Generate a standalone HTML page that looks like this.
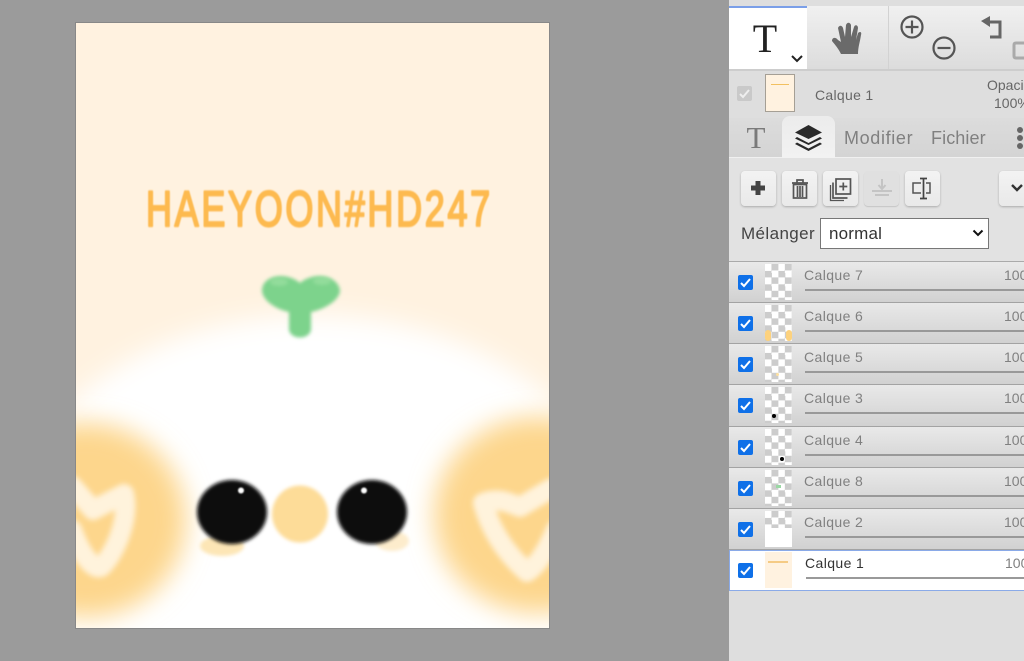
<!DOCTYPE html>
<html><head><meta charset="utf-8">
<style>
html,body{margin:0;padding:0;width:1024px;height:661px;overflow:hidden;background:#9b9b9b;font-family:"Liberation Sans",sans-serif}
#cv{position:absolute;left:0;top:0}
#p{position:absolute;left:729px;top:0;width:295px;height:661px;background:#dedede;overflow:hidden;filter:blur(.35px)}
#p *{box-sizing:border-box}
.a{position:absolute}
.top{left:0;top:6px;width:295px;height:65px;background:linear-gradient(#f0f0f0,#dcdcdc);border-bottom:2px solid #cdcdcd}
.tab{color:#808080;font-size:18px;top:128px;line-height:20px}
.b{position:absolute;top:171px;width:35px;height:35px;background:linear-gradient(#f3f3f3,#e9e9e9);border-radius:4px;box-shadow:0 1px 2px #aaa}
.r{position:absolute;left:0;width:295px;height:41.14px;background:linear-gradient(#e9e9e9,#d1d1d1);border-bottom:1px solid #a3a3a3}
.r.s{background:#fff;border:1px solid #8aaae8;border-right:0;height:41px}
.c{position:absolute;left:9px;top:13px;width:15px;height:15px;background:#0f70e8;border-radius:2px}
.c svg{position:absolute;left:0;top:0}
.t{position:absolute;left:36px;top:2px;width:27px;height:36px;background-color:#fff;background-image:conic-gradient(#ccc 25%,#fff 0 50%,#ccc 0 75%,#fff 0);background-size:13.400px 13.400px;overflow:hidden}
.n{position:absolute;left:75px;top:5px;font-size:14px;line-height:16px;color:#808080;letter-spacing:.4px}
.o{position:absolute;left:275px;top:5px;font-size:14px;line-height:16px;color:#808080}
.l{position:absolute;left:76px;top:27px;width:219px;height:2px;background:#999}
.s .n{color:#333;top:4px}.s .o{top:4px}.s .l{top:26px}.s .c{left:8px;top:12px}.s .t{left:35px;top:1px}
.d{position:absolute;background:#000;border-radius:50%}
</style></head><body>
<svg id="cv" width="729" height="661" viewBox="0 0 729 661">
<defs>
<filter id="b14" x="-40%" y="-40%" width="180%" height="180%"><feGaussianBlur stdDeviation="13"/></filter>
<filter id="b3" x="-40%" y="-40%" width="180%" height="180%"><feGaussianBlur stdDeviation="2.6"/></filter>
<filter id="b2" x="-40%" y="-40%" width="180%" height="180%"><feGaussianBlur stdDeviation="1.8"/></filter>
<filter id="b1" x="-40%" y="-40%" width="180%" height="180%"><feGaussianBlur stdDeviation=".7"/></filter>
<clipPath id="cp"><rect x="76" y="23" width="473" height="605"/></clipPath>
</defs>
<rect width="729" height="661" fill="#9b9b9b"/>
<rect x="76" y="23" width="473" height="605" fill="#fff2e0"/>
<g clip-path="url(#cp)">
<path d="M8 540 A305 225 0 0 1 618 540 V628 H8 Z" fill="#fff" filter="url(#b14)"/>
<rect x="76" y="540" width="473" height="90" fill="#fff"/>
<ellipse cx="86" cy="520" rx="100" ry="97" fill="#fdd68c" filter="url(#b14)"/>
<ellipse cx="538" cy="515" rx="104" ry="98" fill="#fdd68c" filter="url(#b14)"/>
<g fill="none" stroke="#fff3dc" stroke-width="20" stroke-linejoin="round" stroke-linecap="round" filter="url(#b3)">
<path d="M72 486 L93 510 L124 494 C130 520 114 555 101 567 C92 570 80 552 72 530"/>
<path d="M483 503 C498 497 510 503 520 507 L552 488 M483 503 C492 535 510 557 527 572 C538 565 548 548 556 530"/>
</g>
<ellipse cx="222" cy="546" rx="22" ry="10" fill="#fde6b6" filter="url(#b2)"/>
<ellipse cx="392" cy="541" rx="17" ry="10" fill="#fdeccc" filter="url(#b2)"/>
<ellipse cx="300" cy="514" rx="28" ry="28.5" fill="#fddc98" filter="url(#b2)"/>
<ellipse cx="232" cy="512" rx="35" ry="32" fill="#0d0d0d" filter="url(#b2)"/>
<ellipse cx="372" cy="512" rx="35" ry="32" fill="#0d0d0d" filter="url(#b2)"/>
<circle cx="241" cy="490.500" r="3" fill="#fff" filter="url(#b1)"/>
<circle cx="364" cy="490.500" r="3" fill="#fff" filter="url(#b1)"/>
<path d="M262 290 C263 274 288 272 300 283 C312 272 337 274 340 290 C340 300 325 309 311 312 L311 330 C309 340 291 340 289 330 L289 312 C275 309 262 300 262 290 Z" fill="#7dd38c" filter="url(#b2)"/>
<ellipse cx="279" cy="282" rx="9" ry="4" fill="#a2e3a6" opacity=".6" filter="url(#b2)"/>
<ellipse cx="322" cy="281" rx="9" ry="4" fill="#a2e3a6" opacity=".6" filter="url(#b2)"/>
<g transform="translate(146 226) scale(.72 1)" filter="url(#b1)"><text x="0" y="0" font-family="'Liberation Sans',sans-serif" font-size="50" fill="#fdba50" stroke="#fdba50" stroke-width="2.200" stroke-linejoin="round" textLength="478" lengthAdjust="spacing">HAEYOON#HD247</text></g>
</g>
<rect x="75.500" y="22.500" width="474" height="606" fill="none" stroke="#888"/>
</svg>
<div id="p">
<div class="a top"></div>
<div class="a" style="left:0;top:6px;width:78px;height:63px;background:#fff;border-top:2px solid #7b9fe8"></div>
<div class="a" style="left:159px;top:6px;width:1px;height:63px;background:#d2d2d2"></div>
<div class="a" style="left:0;top:19px;width:72px;text-align:center;font-family:'Liberation Serif',serif;font-size:40px;line-height:40px;color:#222">T</div>
<svg class="a" style="left:0;top:0" width="295" height="70" viewBox="729 0 295 70" fill="none">
<path d="M792 56 L797 61 L802 56" stroke="#222" stroke-width="2"/>
<path d="M841 54 C838 48 836 46 832 41 C832 37 836 37 838 40 L841 42 L838 28 C839 25 842 25 843 28 L845 37 L846 25 C847 22 850 22 851 25 L851 37 L854 27 C855 24 858 25 858 28 L856 40 L858 33 C860 31 862 32 861 35 C860 42 858 47 858 54 Z" fill="#6a6a6a"/>
<g stroke="#555" stroke-width="2.200"><circle cx="912" cy="27" r="10.500"/><path d="M905.500 27H918.500M912 20.500V33.500"/><circle cx="944" cy="48" r="10.500"/><path d="M937.500 48H950.500"/>
<path d="M988 22H1000V37H990" stroke-width="3" stroke="#666"/></g>
<path d="M981 21 L990 16 V27 Z" fill="#666"/>
<path d="M1024 43H1016Q1014 43 1014 45V56Q1014 58 1016 58H1024" stroke="#aaa" stroke-width="3"/>
</svg>
<div class="a" style="left:8px;top:86px;width:15px;height:15px;background:#c9c9c9;border-radius:2px"><svg width="15" height="15" style="position:absolute"><path d="M3 8L6 11L12 4" fill="none" stroke="#eee" stroke-width="2"/></svg></div>
<div class="a" style="left:36px;top:74px;width:30px;height:38px;background:#fff2e0;border:1px solid #a59f95"><div class="a" style="left:5px;top:9px;width:18px;height:1px;background:#f2c060"></div></div>
<div class="a" style="left:86px;top:87px;font-size:14px;line-height:16px;color:#666;letter-spacing:.3px">Calque 1</div>
<div class="a" style="left:258px;top:77px;font-size:14px;line-height:16px;color:#666">Opaci</div>
<div class="a" style="left:265px;top:95px;font-size:14px;line-height:16px;color:#666">100%</div>

<div class="a" style="left:0;top:118px;width:295px;height:40px;background:linear-gradient(#dcdcdc,#d4d4d4);border-bottom:1px solid #f0f0f0"></div>
<div class="a" style="left:0;top:158px;width:295px;height:103px;background:#e2e2e2"></div>
<div class="a" style="left:0;top:261px;width:295px;height:1px;background:#aaa"></div>
<div class="a" style="left:53px;top:116px;width:53px;height:42px;background:linear-gradient(#ececec,#f2f2f2);border-radius:8px 8px 0 0"></div>
<div class="a" style="left:15px;top:122px;width:24px;text-align:center;font-family:'Liberation Serif',serif;font-size:31px;line-height:32px;color:#7a7a7a">T</div>
<svg class="a" style="left:65px;top:124px" width="30" height="28" viewBox="0 0 30 28"><path d="M14.500 1L28 8.500L14.500 15L1 8.500Z" fill="#2a2a2a"/><path d="M3 13L14.500 19L26 13L28 14.500L14.500 21L1 14.500Z" fill="#2a2a2a"/><path d="M3 18.500L14.500 24.500L26 18.500L28 20L14.500 27L1 20Z" fill="#2a2a2a"/></svg>
<div class="a tab" style="left:115px;letter-spacing:.65px">Modifier</div>
<div class="a tab" style="left:202px;letter-spacing:.1px">Fichier</div>
<div class="d" style="left:288px;top:127px;width:6px;height:6px;background:#666"></div>
<div class="d" style="left:288px;top:135px;width:6px;height:6px;background:#666"></div>
<div class="d" style="left:288px;top:143px;width:6px;height:6px;background:#666"></div>

<div class="b" style="left:12px"></div><div class="b" style="left:53px"></div><div class="b" style="left:94px"></div>
<div class="b" style="left:135px;background:#e0e0e0;box-shadow:0 1px 1px #c4c4c4"></div><div class="b" style="left:176px"></div><div class="b" style="left:270px;width:25px;border-radius:4px 0 0 4px"></div>
<svg class="a" style="left:0;top:165px" width="295" height="45" viewBox="729 165 295 45" fill="none">
<path d="M758 181V195M751 188H765" stroke="#444" stroke-width="5"/>
<g stroke="#555" stroke-width="1.700"><path d="M792 183H808M797 183V180H803V183"/><rect x="793.500" y="184.500" width="13" height="13.500"/><path d="M797.500 186V197M800 186V197M802.500 186V197"/>
<rect x="836" y="179" width="14.500" height="15"/><path d="M843.300 182.500V190.500M839.300 186.500H847.300"/><path d="M833 182.500V198H847.500"/><path d="M830.500 185V200.500H844" stroke-width="1.300"/></g>
<path d="M882 179V188M878.500 185L882 189L885.500 185" stroke="#c4c4c4" stroke-width="2"/><path d="M872 191H892M875 195H889" stroke="#c4c4c4" stroke-width="2"/>
<path d="M921 183H913V193H921M926 183H930V193H926" stroke="#555" stroke-width="1.500"/><path d="M923.500 179V198M920 178.500H927M920 198.500H927" stroke="#444" stroke-width="1.700"/>
<path d="M1012 185L1017 190L1022 185" stroke="#333" stroke-width="2.400"/>
</svg>

<div class="a" style="left:12px;top:224px;font-size:17px;line-height:20px;color:#444;letter-spacing:.4px">Mélanger</div>
<div class="a" style="left:91px;top:218px;width:169px;height:31px;background:#fff;border:1px solid #777"></div>
<div class="a" style="left:100px;top:224px;font-size:17px;line-height:20px;color:#333;letter-spacing:.2px">normal</div>
<svg class="a" style="left:243px;top:228px" width="12" height="10"><path d="M1.500 2.500L6 7L10.500 2.500" fill="none" stroke="#111" stroke-width="2"/></svg>

<div class="r" style="top:262px"><div class="c"><svg width="15" height="15"><path d="M3 8L6 11L12 4" fill="none" stroke="#fff" stroke-width="2"/></svg></div><div class="t"></div><div class="n">Calque 7</div><div class="o">100</div><div class="l"></div></div>
<div class="r" style="top:303.140px"><div class="c"><svg width="15" height="15"><path d="M3 8L6 11L12 4" fill="none" stroke="#fff" stroke-width="2"/></svg></div><div class="t"><div class="a" style="left:0;top:25px;width:6px;height:11px;background:#fdd27e;border-radius:3px"></div><div class="a" style="left:21px;top:25px;width:6px;height:11px;background:#fdd27e;border-radius:3px"></div></div><div class="n">Calque 6</div><div class="o">100</div><div class="l"></div></div>
<div class="r" style="top:344.280px"><div class="c"><svg width="15" height="15"><path d="M3 8L6 11L12 4" fill="none" stroke="#fff" stroke-width="2"/></svg></div><div class="t"><div class="a" style="left:11px;top:27px;width:3px;height:3px;background:#fde0a0;border-radius:50%"></div></div><div class="n">Calque 5</div><div class="o">100</div><div class="l"></div></div>
<div class="r" style="top:385.420px"><div class="c"><svg width="15" height="15"><path d="M3 8L6 11L12 4" fill="none" stroke="#fff" stroke-width="2"/></svg></div><div class="t"><div class="d" style="left:7px;top:27px;width:4px;height:4px"></div></div><div class="n">Calque 3</div><div class="o">100</div><div class="l"></div></div>
<div class="r" style="top:426.560px"><div class="c"><svg width="15" height="15"><path d="M3 8L6 11L12 4" fill="none" stroke="#fff" stroke-width="2"/></svg></div><div class="t"><div class="d" style="left:15px;top:28px;width:4px;height:4px"></div></div><div class="n">Calque 4</div><div class="o">100</div><div class="l"></div></div>
<div class="r" style="top:467.700px"><div class="c"><svg width="15" height="15"><path d="M3 8L6 11L12 4" fill="none" stroke="#fff" stroke-width="2"/></svg></div><div class="t"><div class="a" style="left:11px;top:15px;width:5px;height:3px;background:#9ad8a4"></div></div><div class="n">Calque 8</div><div class="o">100</div><div class="l"></div></div>
<div class="r" style="top:508.840px"><div class="c"><svg width="15" height="15"><path d="M3 8L6 11L12 4" fill="none" stroke="#fff" stroke-width="2"/></svg></div><div class="t"><div class="a" style="left:0;top:17px;width:27px;height:19px;background:#fff"></div></div><div class="n">Calque 2</div><div class="o">100</div><div class="l"></div></div>
<div class="r s" style="top:550px"><div class="c"><svg width="15" height="15"><path d="M3 8L6 11L12 4" fill="none" stroke="#fff" stroke-width="2"/></svg></div><div class="t" style="background:#fff2e0"><div class="a" style="left:3px;top:9px;width:20px;height:2px;background:#f5cb85"></div></div><div class="n">Calque 1</div><div class="o">100</div><div class="l"></div></div>
</div>
</body></html>
